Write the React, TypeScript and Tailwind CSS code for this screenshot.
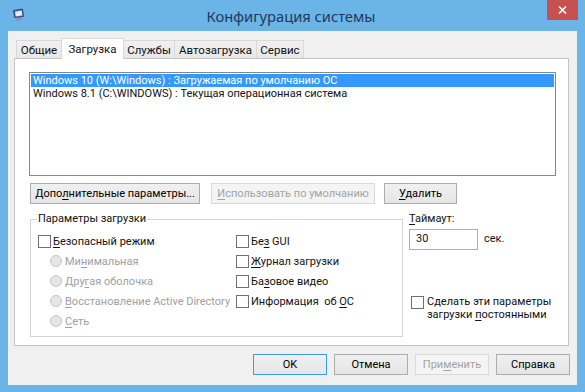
import type { ReactNode } from "react";

const font = "font-['Roboto','Segoe_UI',sans-serif]";

function Acc({ text, at }: { text: string; at: number }) {
  return (
    <span className="whitespace-pre">
      {text.slice(0, at)}
      <span className="underline underline-offset-[2px]">{text[at]}</span>
      {text.slice(at + 1)}
    </span>
  );
}

function Btn({ children, w, disabled, def }: { children: ReactNode; w: string; disabled?: boolean; def?: boolean }) {
  const base = "h-[21px] flex items-center justify-center border leading-none shrink-0 whitespace-nowrap";
  let look = "border-[#acacac] bg-gradient-to-b from-[#f0f0f0] to-[#e5e5e5] text-black";
  if (disabled) look = "border-[#d9d9d9] bg-[#f4f4f4] text-[#a3a3a3]";
  if (def) look = "border-[#3c9be8] bg-gradient-to-b from-[#f0f0f0] to-[#e5e5e5] text-black";
  return (
    <div className={`${base} ${look} ${w}`}>
      <span>{children}</span>
    </div>
  );
}

function Check({ children }: { children: ReactNode }) {
  return (
    <div className="h-[20px] flex items-center">
      <span className="w-[13px] h-[13px] border border-[#707070] bg-white shrink-0" />
      <span className="ml-[2px] leading-none whitespace-pre">{children}</span>
    </div>
  );
}

function Radio({ children }: { children: ReactNode }) {
  return (
    <div className="h-[20px] flex items-center pl-[12px] text-[#a0a0a0]">
      <span className="w-[12px] h-[12px] rounded-full border border-[#c6c6c6] bg-[#e6e6e6] shrink-0" />
      <span className="ml-[3px] leading-none whitespace-nowrap">{children}</span>
    </div>
  );
}

const tabs = [
  { label: "Общие", w: "w-[46px]" },
  { label: "Загрузка", w: "w-[63px]", active: true },
  { label: "Службы", w: "w-[52px]" },
  { label: "Автозагрузка", w: "w-[83px]" },
  { label: "Сервис", w: "w-[48px]" },
];

export default function App() {
  return (
    <div className={`w-[585px] h-[392px] bg-[#6ab4e8] flex flex-col text-[11px] text-[#111] ${font}`}>
      <div className="h-[31px] flex items-start shrink-0">
        <div className="ml-[12px] mt-[8px] w-[13px] h-[14px]">
          <svg width="13" height="14" viewBox="0 0 13 14">
            <path d="M1.5 2.5 L10.5 1 L11.5 8.5 L2.5 9.5 Z" fill="#4b5d9a" stroke="#2f3d6e" strokeWidth="0.8" />
            <path d="M3 3.5 L9.7 2.5 L10.4 7.6 L3.6 8.4 Z" fill="#d7e1f6" />
            <path d="M4.5 5.6 L6 7 L9 4" stroke="#ffffff" strokeWidth="1.2" fill="none" />
            <path d="M4 10.5 L9.5 10 L10 12 L4 12.5 Z" fill="#8d92a8" />
          </svg>
        </div>
        <div className="flex-1 text-center pt-[6px] text-[14.7px] leading-[20px] text-[#1f3a58] pl-[10px] font-['Noto_Sans',sans-serif]">
          Конфигурация системы
        </div>
        <div className="w-[31px] h-[20px] mr-[7px] bg-[#c75050] flex items-center justify-center">
          <svg width="9" height="8" viewBox="0 0 9 8">
            <path d="M1 0.5 L8 7.5 M8 0.5 L1 7.5" stroke="#ffffff" strokeWidth="1.6" />
          </svg>
        </div>
      </div>

      <div className="mx-[8px] mb-[7px] flex-1 bg-[#f0f0f0] flex flex-col pt-[7px] pl-[6px] pr-[8px]">
        <div className="h-[20px] flex items-end pl-[2px] text-[11.5px]">
          {tabs.map((t) =>
            t.active ? (
              <div
                key={t.label}
                className={`${t.w} h-[21px] -mb-[1px] -ml-[1px] relative z-10 bg-white border border-b-0 border-[#d9d9d9] flex justify-center pt-[3px] leading-[14px]`}
              >
                {t.label}
              </div>
            ) : (
              <div
                key={t.label}
                className={`${t.w} h-[18px] -ml-[1px] first:ml-0 bg-gradient-to-b from-[#f0f0f0] to-[#e8e8e8] border border-b-0 border-[#d9d9d9] flex justify-center pt-[2px] leading-[14px]`}
              >
                {t.label}
              </div>
            )
          )}
        </div>

        <div className="h-[288px] bg-white border border-[#c4c4c4] flex flex-col pt-[13px] pl-[14px] pr-[12px]">
          <div className="h-[104px] border border-[#828790] p-[1px] flex flex-col leading-[13px]">
            <div className="h-[13px] bg-[#3399ff] text-white pl-[2px] whitespace-pre">Windows 10 (W:\Windows) : Загружаемая по умолчанию ОС</div>
            <div className="h-[13px] pl-[2px] whitespace-pre">Windows 8.1 (C:\WINDOWS) : Текущая операционная система</div>
          </div>

          <div className="flex mt-[7px] pl-[1px]">
            <Btn w="w-[170px]"><Acc text="Дополнительные параметры..." at={4} /></Btn>
            <div className="ml-[11px]">
              <Btn w="w-[164px]" disabled><Acc text="Использовать по умолчанию" at={0} /></Btn>
            </div>
            <div className="ml-[9px]">
              <Btn w="w-[73px]"><Acc text="Удалить" at={0} /></Btn>
            </div>
          </div>

          <div className="flex mt-[8px] pl-[1px]">
            <fieldset className="w-[373px] h-[125px] border border-[#d5d5d5] px-[7px]">
              <legend className="ml-[-1px] px-[1px] leading-[14px]">Параметры загрузки</legend>
              <div className="flex mt-[5px]">
                <div className="w-[198px] flex flex-col">
                  <Check><Acc text="Безопасный режим" at={0} /></Check>
                  <Radio><Acc text="Минимальная" at={2} /></Radio>
                  <Radio><Acc text="Другая оболочка" at={3} /></Radio>
                  <Radio><Acc text="Восстановление Active Directory" at={0} /></Radio>
                  <Radio><Acc text="Сеть" at={0} /></Radio>
                </div>
                <div className="flex flex-col">
                  <Check><Acc text="Без GUI" at={2} /></Check>
                  <Check><Acc text="Журнал загрузки" at={0} /></Check>
                  <Check><Acc text="Базовое видео" at={2} /></Check>
                  <Check><Acc text="Информация  об ОС" at={15} /></Check>
                </div>
              </div>
            </fieldset>

            <div className="ml-[6px] flex flex-col">
              <div className="leading-[14px]"><Acc text="Таймаут:" at={0} /></div>
              <div className="flex items-center mt-[3px]">
                <div className="w-[69px] h-[21px] border border-[#abadb3] bg-white flex items-center pl-[6px]">30</div>
                <div className="ml-[6px]">сек.</div>
              </div>
              <div className="flex items-start mt-[45px] ml-[2px]">
                <span className="w-[13px] h-[13px] mt-[1px] border border-[#707070] bg-white shrink-0" />
                <div className="ml-[3px] leading-[13px] whitespace-nowrap">
                  Сделать эти параметры
                  <br />
                  загрузки <Acc text="постоянными" at={0} />
                </div>
              </div>
            </div>
          </div>
        </div>

        <div className="flex justify-end gap-[7px] mt-[8px] -mr-[1px]">
          <Btn w="w-[74px]" def>OK</Btn>
          <Btn w="w-[74px]">Отмена</Btn>
          <Btn w="w-[74px]" disabled><Acc text="Применить" at={3} /></Btn>
          <Btn w="w-[74px]">Справка</Btn>
        </div>
      </div>
    </div>
  );
}
